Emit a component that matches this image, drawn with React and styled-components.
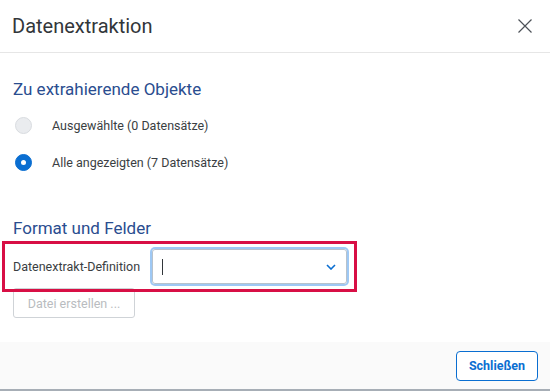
import styled, { createGlobalStyle } from "styled-components";

const Global = createGlobalStyle`
  body {
    margin: 0;
    font-family: Roboto, "Liberation Sans", Arial, sans-serif;
    background: #fff;
  }
`;

const Dialog = styled.div`
  width: 550px;
  height: 391px;
  display: flex;
  flex-direction: column;
  background: #fff;
  border-bottom: 2px solid #a7aeb6;
  box-sizing: border-box;
`;

const Header = styled.div`
  height: 53px;
  box-sizing: border-box;
  display: flex;
  align-items: center;
  justify-content: space-between;
  padding: 0 17px 0 12px;
  border-bottom: 1px solid #e6e6e6;
`;

const Title = styled.h1`
  margin: 0;
  font-size: 20px;
  font-weight: 400;
  color: #32363a;
`;

const CloseBtn = styled.button`
  border: 0;
  background: none;
  padding: 0;
  width: 16px;
  height: 16px;
  display: flex;
  cursor: pointer;
`;

const Content = styled.div`
  flex: 1;
  padding: 26px 12px 0 13px;
`;

const SectionTitle = styled.h2`
  margin: ${(p) => p.$top || 0}px 0 0;
  font-size: 17px;
  line-height: 20px;
  font-weight: 400;
  color: #2a4d8f;
`;

const RadioList = styled.div`
  display: flex;
  flex-direction: column;
  gap: 17px;
  margin-top: 16px;
`;

const RadioRow = styled.label`
  display: flex;
  align-items: center;
  height: 20px;
  font-size: 12.5px;
  color: #3a3e42;
  gap: 20px;
`;

const RadioDot = styled.span`
  width: 17px;
  height: 17px;
  margin-left: 2px;
  border-radius: 50%;
  box-sizing: border-box;
  display: flex;
  align-items: center;
  justify-content: center;
  background: ${(p) => (p.$checked ? "#0a6ed1" : "#eaecef")};
  border: 1px solid ${(p) => (p.$checked ? "#0a6ed1" : "#d9dce0")};

  &::after {
    content: "";
    width: 5px;
    height: 5px;
    border-radius: 50%;
    background: #fff;
    display: ${(p) => (p.$checked ? "block" : "none")};
  }
`;

const FieldRow = styled.div`
  position: relative;
  display: flex;
  align-items: center;
  width: max-content;
  margin: 11px 0 4px;
  gap: 14px;

  &::after {
    content: "";
    position: absolute;
    top: -8px;
    bottom: -8px;
    left: -11px;
    right: -10px;
    border: 3px solid #d80f45;
    pointer-events: none;
  }
`;

const FieldLabel = styled.span`
  font-size: 12.5px;
  color: #3a3e42;
  width: 125px;
  white-space: nowrap;
`;

const Select = styled.div`
  width: 195px;
  height: 35px;
  box-sizing: border-box;
  border: 1px solid #b7c2cc;
  border-radius: 3px;
  box-shadow: 0 0 0 2px #9ec8f4;
  display: flex;
  align-items: center;
  justify-content: space-between;
  padding: 0 10px 0 9px;
`;

const Caret = styled.span`
  width: 1px;
  height: 16px;
  background: #32363a;
`;

const GhostButton = styled.button`
  font-family: inherit;
  width: 122px;
  height: 30px;
  border: 1px solid #cfd3d7;
  border-radius: 3px;
  background: #fff;
  color: #b9bcc0;
  font-size: 12.5px;
  padding: 0;
`;

const Footer = styled.div`
  height: 47px;
  background: #fafafa;
  display: flex;
  align-items: center;
  justify-content: flex-end;
  padding: 0 12px;
`;

const PrimaryButton = styled.button`
  font-family: inherit;
  width: 82px;
  height: 30px;
  border: 1px solid #0a6ed1;
  border-radius: 4px;
  background: #fff;
  color: #0a6ed1;
  font-size: 12.5px;
  font-weight: 700;
`;

const App = () => {
  return (
    <>
      <Global />
      <Dialog>
        <Header>
          <Title>Datenextraktion</Title>
          <CloseBtn aria-label="Schließen">
            <svg width="16" height="16" viewBox="0 0 16 16">
              <path d="M1.5 1.5 L14.5 14.5 M14.5 1.5 L1.5 14.5" stroke="#4d5258" strokeWidth="1.2" fill="none" />
            </svg>
          </CloseBtn>
        </Header>

        <Content>
          <SectionTitle>Zu extrahierende Objekte</SectionTitle>
          <RadioList>
            <RadioRow>
              <RadioDot />
              Ausgewählte (0 Datensätze)
            </RadioRow>
            <RadioRow>
              <RadioDot $checked />
              Alle angezeigten (7 Datensätze)
            </RadioRow>
          </RadioList>

          <SectionTitle $top={46}>Format und Felder</SectionTitle>
          <FieldRow>
            <FieldLabel>Datenextrakt-Definition</FieldLabel>
            <Select>
              <Caret />
              <svg width="10" height="6" viewBox="0 0 10 6">
                <path d="M1 1 L5 5 L9 1" stroke="#0a6ed1" strokeWidth="1.6" fill="none" />
              </svg>
            </Select>
          </FieldRow>
          <GhostButton disabled>Datei erstellen ...</GhostButton>
        </Content>

        <Footer>
          <PrimaryButton>Schließen</PrimaryButton>
        </Footer>
      </Dialog>
    </>
  );
};

export default App;
